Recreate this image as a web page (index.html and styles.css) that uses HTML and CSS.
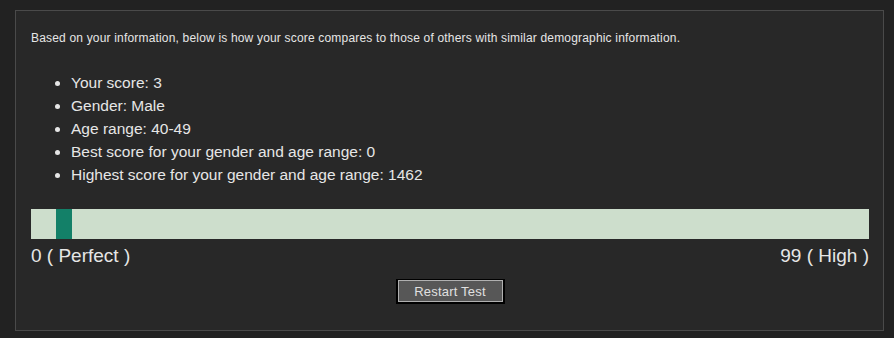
FILE: index.html
```html
<!DOCTYPE html>
<html lang="en">
<head>
    <meta charset="UTF-8">
    <meta name="viewport" content="width=device-width, initial-scale=1.0">
    <title>Score Comparison</title>
    <link rel="stylesheet" href="styles.css">
</head>
<body>
    <div class="result-panel">
        <p class="intro">Based on your information, below is how your score compares to those of others with similar demographic information.</p>
        <ul class="stats">
            <li>Your score: 3</li>
            <li>Gender: Male</li>
            <li>Age range: 40-49</li>
            <li>Best score for your gender and age range: 0</li>
            <li>Highest score for your gender and age range: 1462</li>
        </ul>
        <div class="score-bar">
            <div class="marker" style="margin-left: 25px"></div>
        </div>
        <div class="scale">
            <span>0 ( Perfect )</span>
            <span>99 ( High )</span>
        </div>
        <div class="actions">
            <button class="restart">Restart Test</button>
        </div>
    </div>
</body>
</html>
```

FILE: styles.css
```css
body, html {
    margin: 0;
    background-color: #222222;
    font-family: 'Liberation Sans', Arial, sans-serif;
    color: #e6e6e6;
}
body {
    padding: 10px 10px 7px 15px;
}
.result-panel {
    background-color: #282828;
    border: 1px solid #4a4a4a;
    padding: 20px 14px 26px 15px;
}
.intro {
    font-size: 12px;
    letter-spacing: 0.18px;
    line-height: 15px;
    margin: 0 0 25px;
}
.stats {
    font-size: 15.5px;
    line-height: 23px;
    margin: 0 0 23px;
    padding-left: 40px;
}
.score-bar {
    background-color: #cddecc;
    height: 30px;
    display: flex;
}
.marker {
    width: 16px;
    background-color: #138068;
}
.scale {
    display: flex;
    justify-content: space-between;
    font-size: 19px;
    line-height: 20px;
    margin-top: 7px;
}
.actions {
    display: flex;
    justify-content: center;
    margin-top: 13px;
}
.restart {
    width: 109px;
    height: 25px;
    padding: 0;
    font-family: 'Liberation Sans', Arial, sans-serif;
    font-size: 13px;
    letter-spacing: 0.2px;
    color: #e0e0e0;
    background-color: #575757;
    border: 2px solid #000;
    border-top-width: 1px;
    box-shadow: inset 0 0 0 1px #b0b0b0;
    cursor: pointer;
}
```
